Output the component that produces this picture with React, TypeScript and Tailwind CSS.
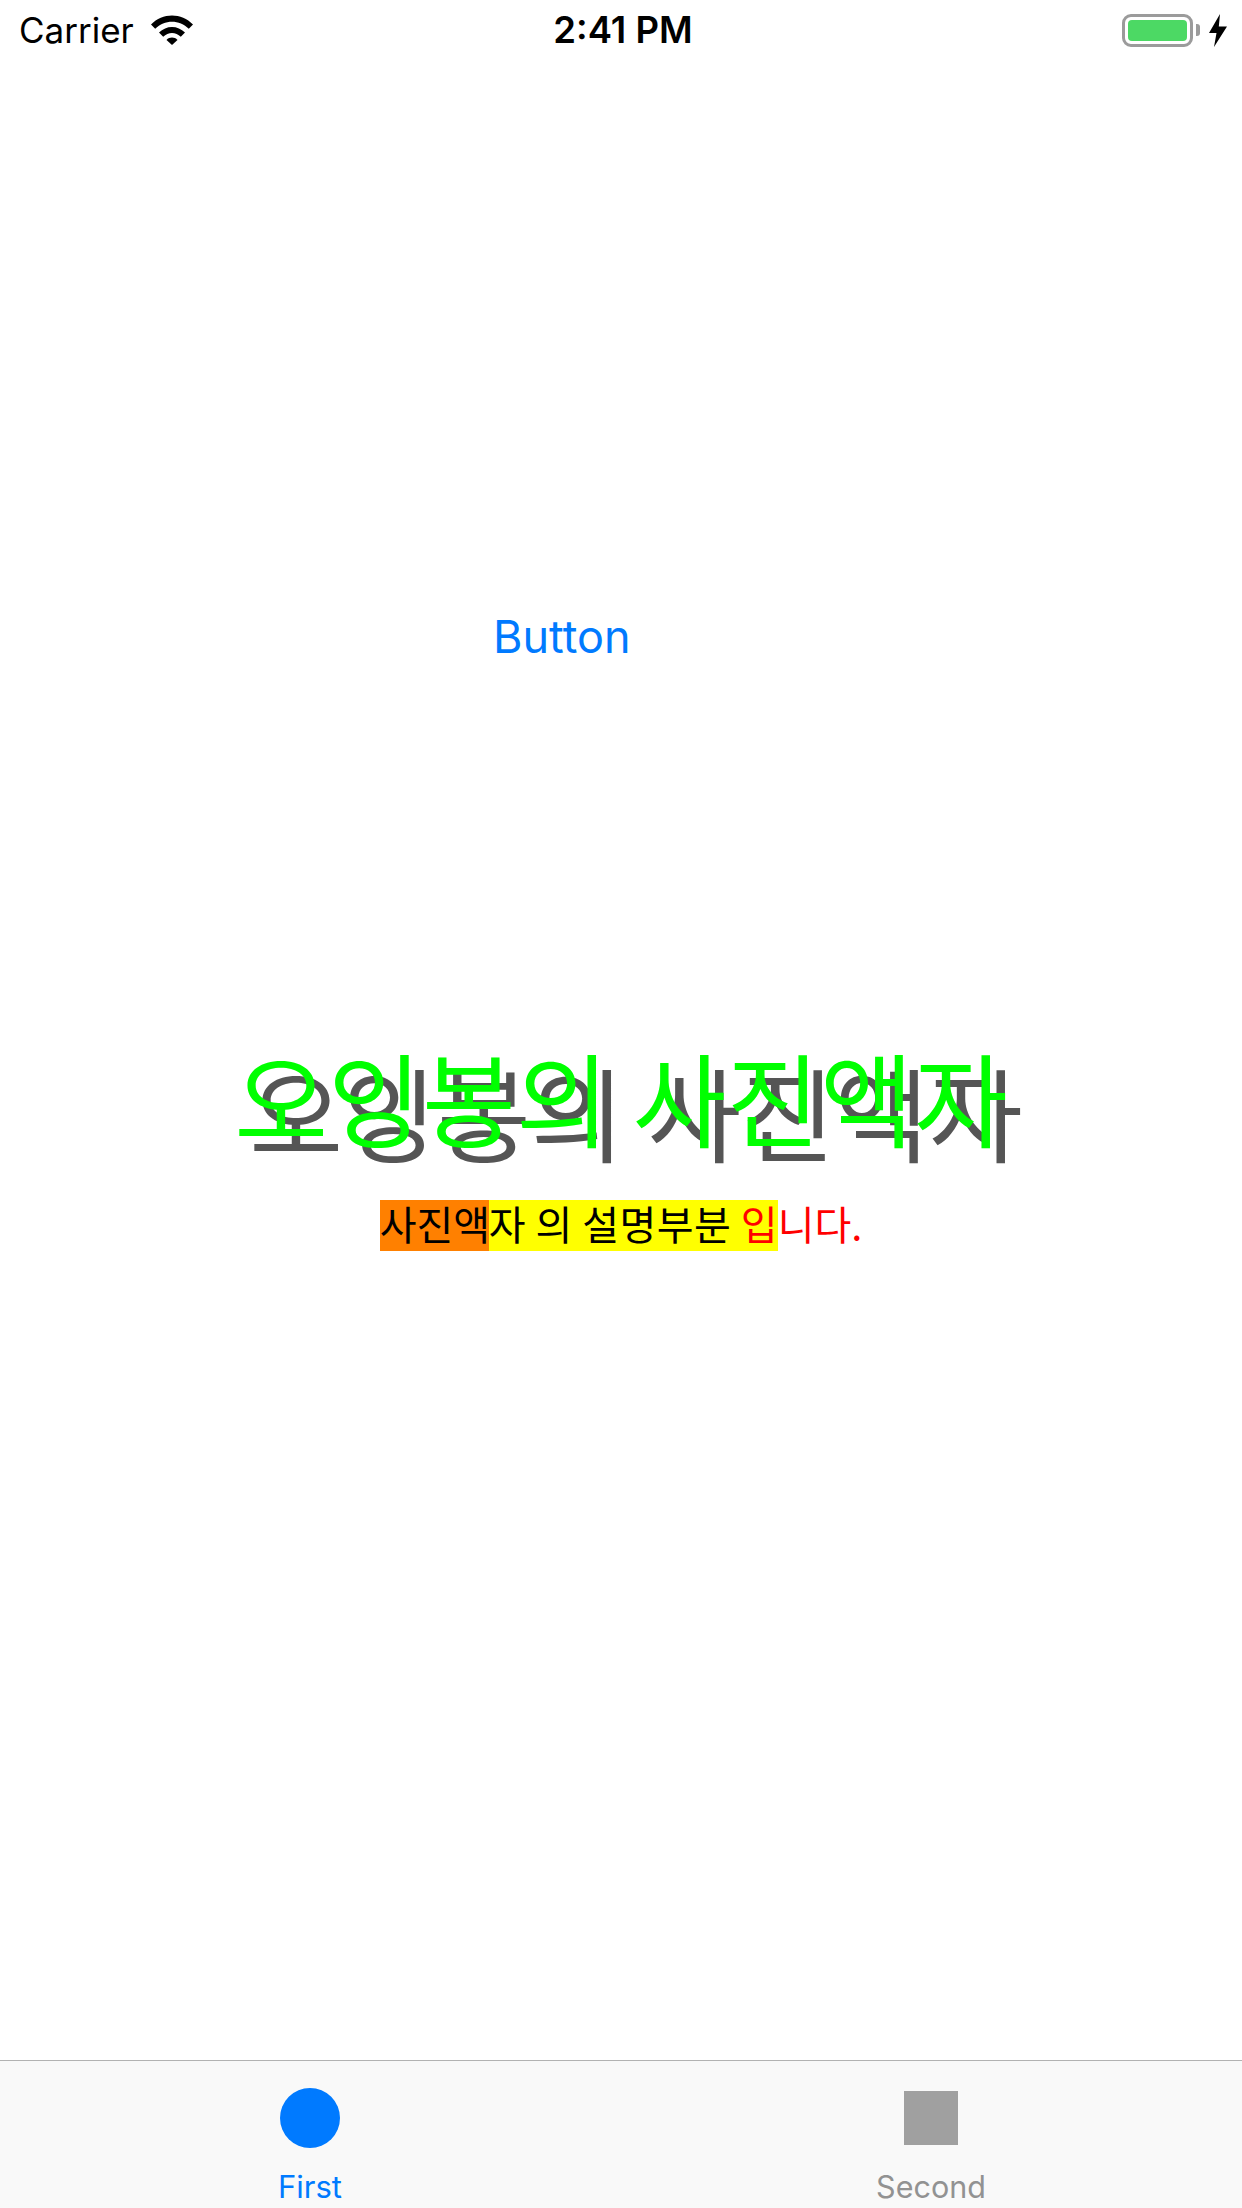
export default function App() {
  const ui = { fontFamily: 'Inter, "Noto Sans", sans-serif' };
  const ko = { fontFamily: '"Noto Sans CJK KR", sans-serif' };
  return (
    <div className="flex h-[2208px] w-[1242px] flex-col overflow-hidden bg-white text-black" style={ui}>
      <div className="flex h-[60px] items-center justify-between pl-[19px] pr-[15px]">
        <div className="flex w-[400px] items-center gap-[17px]">
          <span className="text-[35px] leading-[60px]">Carrier</span>
          <svg width="42" height="30" viewBox="0 0 42 30" className="mb-[1px]">
            <path d="M0 9.5C11.500-2.500 30.500-2.500 42 9.500L37.800 13.800C28.500 4.300 13.500 4.300 4.200 13.800Z" />
            <path d="M8 17.500C15.200 10 26.800 10 34 17.500L29.800 21.800C24.800 16.700 17.200 16.700 12.200 21.800Z" />
            <path d="M15.500 25C18.500 21.800 23.500 21.800 26.500 25L21 30Z" />
          </svg>
        </div>
        <span className="text-[36.5px] font-semibold leading-[60px]">2:41 PM</span>
        <div className="flex w-[400px] items-center justify-end">
          <div className="flex h-[33px] w-[71px] items-center rounded-[9px] border-[3px] border-[#9b9b9b] p-[3px]">
            <div className="h-full w-full rounded-[4px] bg-[#4cd964]" />
          </div>
          <div className="ml-[3px] h-[12px] w-[4px] rounded-r-[3px] bg-[#9b9b9b]" />
          <svg width="18" height="33" viewBox="0 0 18 33" className="ml-[9px]">
            <path d="M11 0L0 19H7.500L5 33L18 12.500H9.800Z" />
          </svg>
        </div>
      </div>
      <div className="flex flex-1 flex-col">
        <div className="pl-[493px] pt-[550px] text-[45px] leading-[54px] text-[#007aff]">Button</div>
        <div
          className="mt-[362px] text-center text-[102px] leading-[140px] text-[#00ff00] [text-shadow:15px_15px_0_#555555]"
          style={ko}
        >
          오잉봉의 사진액자
        </div>
        <div className="mt-[34px] flex justify-center whitespace-pre text-[40px] leading-[46px] text-black" style={ko}>
          <span className="h-[51px] w-[109px] bg-[#ff8000]">사진액</span>
          <span className="h-[51px] w-[289px] bg-[#ffff00] tracking-[0.5px]">
            자 의 설명부분 <span className="text-[#ff0000]">입</span>
          </span>
          <span className="h-[51px] text-[#ff0000]">니다.</span>
        </div>
      </div>
      <div className="grid h-[148px] grid-cols-[620px_622px] border-t border-[#b2b2b2] bg-[#f9f9f9]">
        <div className="flex flex-col items-center text-[#007aff]">
          <div className="mt-[27px] h-[60px] w-[60px] rounded-full bg-[#007aff]" />
          <span className="mt-[21px] text-[31px] leading-[36px]">First</span>
        </div>
        <div className="flex flex-col items-center text-[#929292]">
          <div className="mt-[30px] h-[54px] w-[54px] bg-[#a0a0a0]" />
          <span className="mt-[24px] text-[30.500px] leading-[36px]">Second</span>
        </div>
      </div>
    </div>
  );
}
